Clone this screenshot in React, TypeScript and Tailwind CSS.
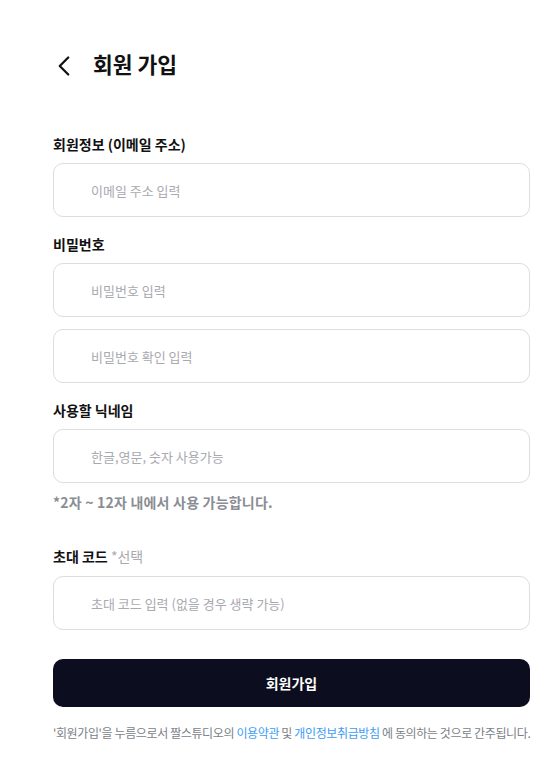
import { ChevronLeft } from 'lucide-react';

const font = { fontFamily: '"Noto Sans CJK KR", "Noto Sans", sans-serif' };

function Field({ placeholder }: { placeholder: string }) {
  return (
    <input
      type="text"
      placeholder={placeholder}
      className="w-full h-[54px] px-[37px] border border-[#dcdce4] rounded-[10px] text-[13px] text-gray-800 placeholder:text-[#a9a9b0] outline-none"
    />
  );
}

export default function App() {
  return (
    <main className="min-h-screen bg-white" style={font}>
      <div className="px-[53px] w-[584px] max-w-full">
        {/* Header */}
        <div className="h-[132px] pt-[48px] flex items-start">
          <div className="flex items-center gap-[12px] h-[36px] ml-[-6px]">
            <ChevronLeft className="w-[34px] h-[34px] text-[#111]" strokeWidth={1.6} />
            <h1 className="text-[21.5px] font-bold text-[#111] leading-[32px] mt-[-4px]">회원 가입</h1>
          </div>
        </div>

        <div className="w-[477px]">
          <label className="block text-[14px] font-bold text-[#111] leading-[24px] mb-[7px]">회원정보 (이메일 주소)</label>
          <Field placeholder="이메일 주소 입력" />

          <label className="block text-[14px] font-bold text-[#111] leading-[24px] mt-[15px] mb-[7px]">비밀번호</label>
          <Field placeholder="비밀번호 입력" />
          <div className="h-[12px]" />
          <Field placeholder="비밀번호 확인 입력" />

          <label className="block text-[14px] font-bold text-[#111] leading-[24px] mt-[15px] mb-[7px]">사용할 닉네임</label>
          <Field placeholder="한글,영문, 숫자 사용가능" />
          <p className="text-[14px] font-bold text-[#8a8d94] leading-[24px] mt-[7px] tracking-[0.2px]">*2자 ~ 12자 내에서 사용 가능합니다.</p>

          <label className="block text-[14px] font-bold text-[#111] leading-[24px] mt-[30px] mb-[8px]">
            초대 코드 <span className="font-normal text-[#a9a9b0]">*선택</span>
          </label>
          <Field placeholder="초대 코드 입력 (없을 경우 생략 가능)" />

          <button className="w-full h-[48px] mt-[29px] bg-[#0c0d1e] text-white text-[14px] font-bold rounded-[10px]">
            회원가입
          </button>

          <p className="text-[12px] text-[#7c7f87] leading-[20px] mt-[16px] whitespace-nowrap tracking-[-0.38px]">
            '회원가입'을 누름으로서 짤스튜디오의 <span className="text-[#3d9df5]">이용약관</span> 및{' '}
            <span className="text-[#3d9df5]">개인정보취급방침</span> 에 동의하는 것으로 간주됩니다.
          </p>
        </div>
      </div>
    </main>
  );
}
